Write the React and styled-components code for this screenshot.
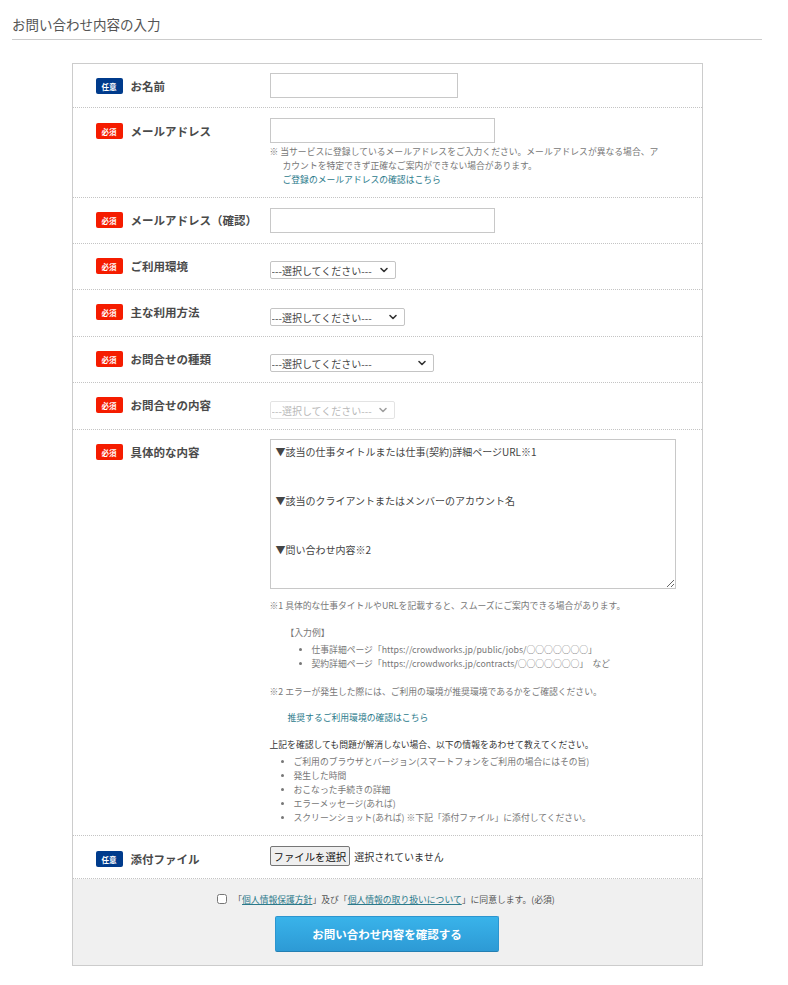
import React from 'react';
import styled, { createGlobalStyle } from 'styled-components';
import { ChevronDown } from 'lucide-react';

const GlobalStyle = createGlobalStyle`
  * { box-sizing: border-box; }
  body {
    margin: 0;
    background: #ffffff;
    font-family: "Noto Sans CJK JP", "Noto Sans", sans-serif;
    color: #444444;
  }
`

const Page = styled.div`
  width: 750px;
  margin-left: 12px;
  padding-bottom: 20px;
`
const PageTitle = styled.h1`
  margin: 0;
  padding: 14px 0 5px;
  font-size: 13.5px;
  line-height: 20px;
  font-weight: 400;
  color: #555555;
  border-bottom: 1px solid #cccccc;
`
const FormBox = styled.form`
  width: 631px;
  margin: 23px auto 0;
  border: 1px solid #cccccc;
`
const Row = styled.div`
  display: grid;
  grid-template-columns: 197px 1fr;
  border-bottom: 1px dotted #c4c4c4;
`
const LabelCell = styled.div`
  display: flex;
  align-items: center;
  align-self: start;
  gap: 8px;
  padding: ${p => p.$top || 14}px 0 0 23px;
  height: ${p => (p.$top || 14) + 16}px;
`
const Badge = styled.span`
  width: 27px;
  height: 16px;
  border-radius: 2px;
  display: flex;
  align-items: center;
  justify-content: center;
  font-size: 7.5px;
  font-weight: 700;
  color: #ffffff;
  background-color: ${p => (p.$required ? '#f51c00' : '#003b8c')};
`
const LabelText = styled.span`
  font-size: 11.5px;
  font-weight: 700;
  color: #4a4a4a;
  white-space: nowrap;
`
const FieldCell = styled.div`
  padding: ${p => p.$top}px 26px ${p => p.$bottom || 10}px 0;
`
const TextInput = styled.input`
  display: block;
  width: ${p => p.$w}px;
  height: 25px;
  border: 1px solid #c8c8c8;
  border-radius: 0;
  padding: 2px 6px;
  font-size: 11px;
  font-family: inherit;
  outline: none;
`
const Note = styled.p`
  margin: 2px 0 0;
  padding-left: 13px;
  text-indent: -13px;
  font-size: 8.8px;
  line-height: 14px;
  color: #777777;
`
const TextLink = styled.a`
  color: #2b7a8b;
  text-decoration: ${p => (p.$underline ? 'underline' : 'none')};
  cursor: pointer;
`
const SelectWrap = styled.label`
  position: relative;
  display: block;
  width: ${p => p.$w}px;
  height: 18px;
  svg {
    position: absolute;
    right: 6px;
    top: 3px;
    pointer-events: none;
    color: ${p => (p.$disabled ? '#a0a0a0' : '#333333')};
  }
`
const Select = styled.select`
  appearance: none;
  display: block;
  width: 100%;
  height: 18px;
  margin: 0;
  border: 1px solid ${p => (p.disabled ? '#d8d8d8' : '#c4c4c4')};
  border-radius: 2px;
  background: #ffffff;
  padding: 0 0 0 1px;
  font-family: inherit;
  font-size: 10px;
  color: ${p => (p.disabled ? '#9a9a9a' : '#444444')};
  outline: none;
`
const TextArea = styled.textarea`
  display: block;
  width: 406px;
  height: 150px;
  border: 1px solid #c8c8c8;
  padding: 4px 5px;
  font-family: inherit;
  font-size: 10px;
  line-height: 16.3px;
  color: #444444;
  resize: both;
  outline: none;
`
const Help = styled.p`
  margin: ${p => p.$mt}px 0 0;
  padding-left: ${p => p.$indent || 0}px;
  font-size: 8.8px;
  line-height: 14px;
  color: ${p => (p.$dark ? '#333333' : '#777777')};
  white-space: nowrap;
`
const BulletList = styled.ul`
  margin: 3px 0 0;
  padding-left: ${p => p.$indent}px;
  font-size: 8.8px;
  line-height: 14px;
  color: #777777;
  white-space: nowrap;
  li::marker {
    font-size: 8px;
  }
`
const FileRow = styled.label`
  display: flex;
  align-items: center;
  gap: 4px;
  input { display: none; }
`
const FileButton = styled.span`
  display: inline-flex;
  align-items: center;
  height: 20px;
  padding: 0 3px;
  border: 1px solid #767676;
  border-radius: 2px;
  background: #efefef;
  font-size: 10.4px;
  color: #111111;
  cursor: pointer;
`
const FileStatus = styled.span`
  font-size: 10px;
  color: #333333;
`
const Footer = styled.div`
  background: #f0f0f0;
  padding: 13px 0 13px;
  display: flex;
  flex-direction: column;
  align-items: center;
  gap: 10px;
`
const Agree = styled.label`
  display: flex;
  align-items: center;
  gap: 6px;
  height: 14px;
  font-size: 8.8px;
  color: #555555;
  margin-left: -2px;
  input {
    width: 10px;
    height: 10px;
    margin: 0;
  }
`
const SubmitButton = styled.button`
  width: 224px;
  height: 36px;
  border: 1px solid #2c95cf;
  border-bottom-color: #247fb2;
  border-radius: 2px;
  background: linear-gradient(#39b3ea, #2d9ad5);
  color: #ffffff;
  font-family: inherit;
  font-size: 11.5px;
  font-weight: 700;
  cursor: pointer;
`

const textareaValue =
  '▼該当の仕事タイトルまたは仕事(契約)詳細ページURL※1\n\n\n▼該当のクライアントまたはメンバーのアカウント名\n\n\n▼問い合わせ内容※2';

function Label({ required, children, top }) {
  return (
    <LabelCell $top={top}>
      <Badge $required={required}>{required ? '必須' : '任意'}</Badge>
      <LabelText>{children}</LabelText>
    </LabelCell>
  )
}

function Dropdown({ w, disabled }) {
  return (
    <SelectWrap $w={w} $disabled={disabled}>
      <Select disabled={disabled} defaultValue="">
        <option value="">---選択してください---</option>
      </Select>
      <ChevronDown size={12} strokeWidth={3.2} />
    </SelectWrap>
  )
}

export default function App() {
  return (
    <>
      <GlobalStyle />
      <Page>
        <PageTitle>お問い合わせ内容の入力</PageTitle>
        <FormBox onSubmit={e => e.preventDefault()}>
          <Row>
            <Label>お名前</Label>
            <FieldCell $top={9} $bottom={9}>
              <TextInput $w={188} />
            </FieldCell>
          </Row>
          <Row>
            <Label required top={15}>メールアドレス</Label>
            <FieldCell $top={10}>
              <TextInput $w={225} />
              <Note>
                ※ 当サービスに登録しているメールアドレスをご入力ください。メールアドレスが異なる場合、ア<br />
                カウントを特定できず正確なご案内ができない場合があります。<br />
                <TextLink>ご登録のメールアドレスの確認はこちら</TextLink>
              </Note>
            </FieldCell>
          </Row>
          <Row>
            <Label required>メールアドレス（確認）</Label>
            <FieldCell $top={10}>
              <TextInput $w={225} />
            </FieldCell>
          </Row>
          <Row>
            <Label required>ご利用環境</Label>
            <FieldCell $top={17}>
              <Dropdown w={126} />
            </FieldCell>
          </Row>
          <Row>
            <Label required>主な利用方法</Label>
            <FieldCell $top={18}>
              <Dropdown w={135} />
            </FieldCell>
          </Row>
          <Row>
            <Label required>お問合せの種類</Label>
            <FieldCell $top={17}>
              <Dropdown w={164} />
            </FieldCell>
          </Row>
          <Row>
            <Label required>お問合せの内容</Label>
            <FieldCell $top={18}>
              <Dropdown w={125} disabled />
            </FieldCell>
          </Row>
          <Row>
            <Label required>具体的な内容</Label>
            <FieldCell $top={9}>
              <TextArea defaultValue={textareaValue} />
              <Help $mt={10}>※1 具体的な仕事タイトルやURLを記載すると、スムーズにご案内できる場合があります。</Help>
              <Help $mt={13} $indent={16}>【入力例】</Help>
              <BulletList $indent={42}>
                <li>仕事詳細ページ「https://crowdworks.jp/public/jobs/○○○○○○○」</li>
                <li>契約詳細ページ「https://crowdworks.jp/contracts/○○○○○○○」　など</li>
              </BulletList>
              <Help $mt={14}>※2 エラーが発生した際には、ご利用の環境が推奨環境であるかをご確認ください。</Help>
              <Help $mt={12} $indent={18}>
                <TextLink>推奨するご利用環境の確認はこちら</TextLink>
              </Help>
              <Help $mt={13} $dark>上記を確認しても問題が解消しない場合、以下の情報をあわせて教えてください。</Help>
              <BulletList $indent={24}>
                <li>ご利用のブラウザとバージョン(スマートフォンをご利用の場合にはその旨)</li>
                <li>発生した時間</li>
                <li>おこなった手続きの詳細</li>
                <li>エラーメッセージ(あれば)</li>
                <li>スクリーンショット(あれば) ※下記「添付ファイル」に添付してください。</li>
              </BulletList>
            </FieldCell>
          </Row>
          <Row>
            <Label top={15}>添付ファイル</Label>
            <FieldCell $top={10} $bottom={12}>
              <FileRow>
                <input type="file" />
                <FileButton>ファイルを選択</FileButton>
                <FileStatus>選択されていません</FileStatus>
              </FileRow>
            </FieldCell>
          </Row>
          <Footer>
            <Agree>
              <input type="checkbox" />
              <span>
                「<TextLink $underline>個人情報保護方針</TextLink>」及び「<TextLink $underline>個人情報の取り扱いについて</TextLink>」に同意します。(必須)
              </span>
            </Agree>
            <SubmitButton type="submit">お問い合わせ内容を確認する</SubmitButton>
          </Footer>
        </FormBox>
      </Page>
    </>
  )
}
